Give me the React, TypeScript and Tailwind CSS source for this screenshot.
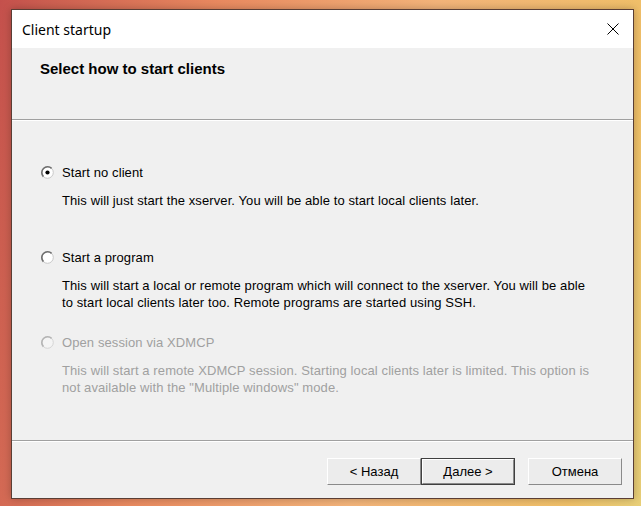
import React from "react";

function Radio({ checked, disabled }: { checked?: boolean; disabled?: boolean }) {
  const ring = disabled ? "#d4d4d4" : "#c8c8c8";
  const arc = disabled ? "#b4b4b4" : "#6e6e6e";
  const fill = disabled ? "#f4f4f4" : "#ffffff";
  return (
    <svg width="13" height="13" viewBox="0 0 13 13" className="shrink-0">
      <circle cx="6.5" cy="6.5" r="5.8" fill={fill} stroke={ring} strokeWidth="1" />
      <path d="M2.4 10.6 A5.8 5.8 0 0 1 10.6 2.4" stroke={arc} strokeWidth="1.6" fill="none" />
      {checked && <circle cx="6.5" cy="6.5" r="2.1" fill="#000000" />}
    </svg>
  );
}

function DlgButton({ label, primary }: { label: string; primary?: boolean }) {
  return (
    <div
      className={`flex h-[27px] w-[94px] items-center justify-center text-[13px] text-black ${
        primary
          ? "border border-[#404040]"
          : "border-t border-l border-t-white border-l-white border-r border-b border-r-[#8a8a8a] border-b-[#8a8a8a]"
      } bg-[#ececec]`}
    >
      {primary ? (
        <div className="flex h-full w-full items-center justify-center border-t border-l border-t-white border-l-white border-r border-b border-r-[#8a8a8a] border-b-[#8a8a8a]">
          {label}
        </div>
      ) : (
        label
      )}
    </div>
  );
}

export default function App() {
  return (
    <div
      className="h-[506px] w-[641px] overflow-hidden bg-[linear-gradient(100deg,#c4504c_0%,#cc5e50_6%,#e98a60_30%,#f3b47a_60%,#f0c068_90%,#e8cf78_100%)] pl-[11px] pt-[9px]"
      style={{ fontFamily: '"Liberation Sans", Arial, sans-serif' }}
    >
      <div className="flex h-[490px] w-[623px] flex-col border border-[#5a3e35] bg-[#f0f0f0] shadow-[0_0_8px_rgba(0,0,0,0.25)]">
        {/* title bar */}
        <div className="flex h-[38px] items-center justify-between bg-white pl-[10px] pr-[14px]">
          <span className="text-[14px] text-black" style={{ fontFamily: '"Noto Sans", "Open Sans", sans-serif' }}>
            Client startup
          </span>
          <svg width="12" height="12" viewBox="0 0 12 12">
            <path d="M0.5 0.5 L11.5 11.5 M11.5 0.5 L0.5 11.5" stroke="#000" strokeWidth="1" />
          </svg>
        </div>

        {/* header */}
        <div className="h-[71px] pl-[28px] pt-[12px]">
          <div className="text-[15px] font-bold leading-[18px] text-black">Select how to start clients</div>
        </div>
        <div className="h-px bg-[#a0a0a0]" />
        <div className="h-px bg-white" />

        {/* body */}
        <div className="flex-1 pl-[29px] pt-[43px] text-[13px] leading-[17px] tracking-[0.1px] text-black">
          <div className="flex items-center gap-[8px]">
            <Radio checked />
            <span>Start no client</span>
          </div>
          <div className="mt-[11px] pl-[21px]">
            This will just start the xserver. You will be able to start local clients later.
          </div>

          <div className="mt-[40px] flex items-center gap-[8px]">
            <Radio />
            <span>Start a program</span>
          </div>
          <div className="mt-[11px] pl-[21px]">
            This will start a local or remote program which will connect to the xserver. You will be able
            <br />
            to start local clients later too. Remote programs are started using SSH.
          </div>

          <div className="mt-[23px] flex items-center gap-[8px] text-[#a0a0a0]">
            <Radio disabled />
            <span>Open session via XDMCP</span>
          </div>
          <div className="mt-[11px] pl-[21px] text-[#a0a0a0]">
            This will start a remote XDMCP session. Starting local clients later is limited. This option is
            <br />
            not available with the "Multiple windows" mode.
          </div>
        </div>

        {/* footer */}
        <div className="h-px bg-[#a0a0a0]" />
        <div className="h-px bg-white" />
        <div className="flex h-[56px] items-start justify-end pr-[11px] pt-[16px]">
          <DlgButton label="< Назад" />
          <DlgButton label="Далее >" primary />
          <div className="w-[13px]" />
          <DlgButton label="Отмена" />
        </div>
      </div>
    </div>
  );
}
